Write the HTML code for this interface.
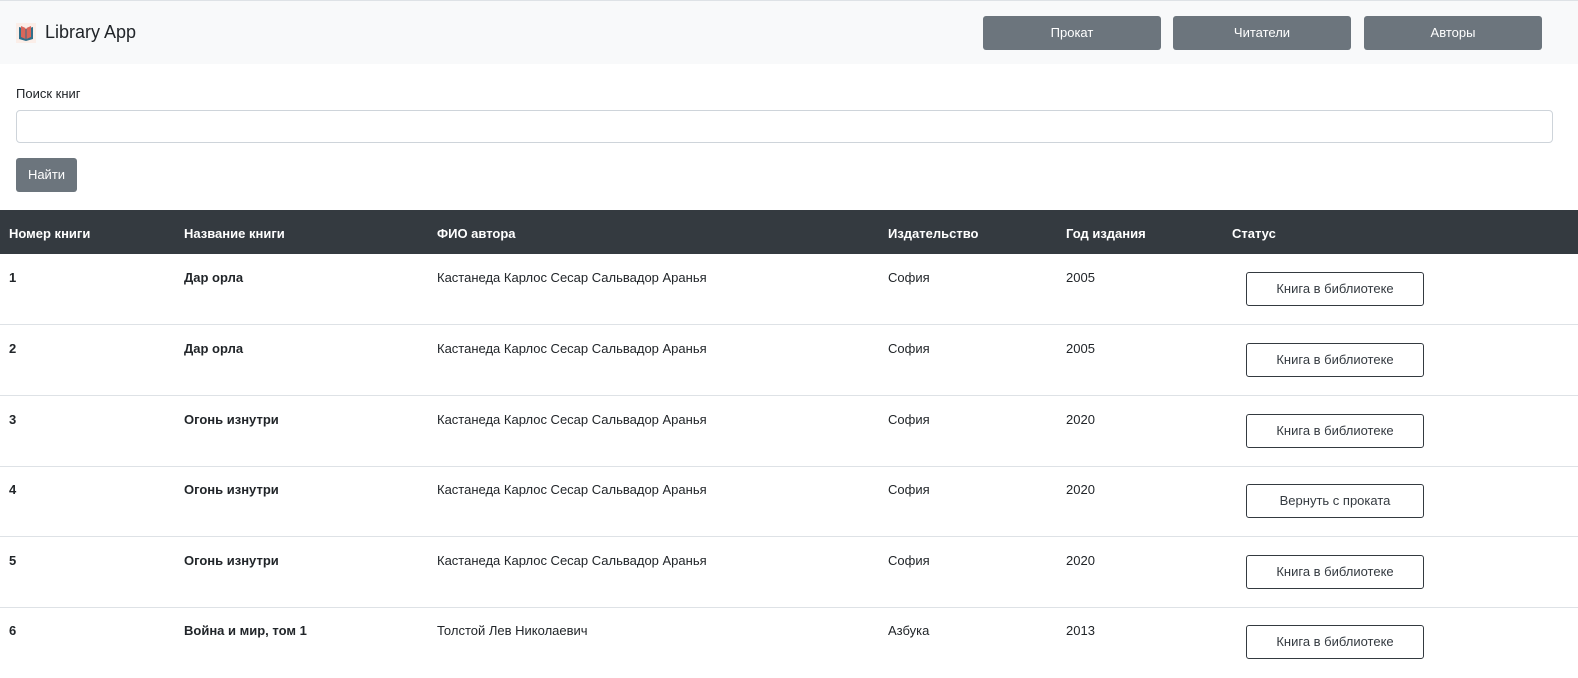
<!DOCTYPE html>
<html><head><meta charset="utf-8"><style>
*{box-sizing:border-box;margin:0;padding:0}
body{width:1578px;height:678px;overflow:hidden;background:#fff;font-family:"Liberation Sans",sans-serif;color:#212529;font-size:13px}
.nav{position:absolute;top:0;left:0;width:1578px;height:64px;background:#f8f9fa;border-top:1px solid #dee2e6}
.brand{position:absolute;left:16px;top:21px;font-size:18px;display:flex;align-items:center}
.brand svg{margin-right:9px}
.nb{position:absolute;top:15px;width:178px;height:34px;background:#6c757d;color:#fff;border-radius:3px;text-align:center;line-height:34px;font-size:13px}
.lbl{position:absolute;left:16px;top:86px;font-size:13px}
.inp{position:absolute;left:16px;top:110px;width:1537px;height:33px;border:1px solid #ced4da;border-radius:4px}
.find{position:absolute;left:16px;top:158px;width:61px;height:34px;background:#6c757d;color:#fff;border-radius:3px;text-align:center;line-height:34px}
.th{position:absolute;top:210px;left:0;width:1578px;height:44px;background:#343a40;color:#fff;font-weight:bold}
.c{position:absolute}
.th .c{top:16px}
.row{position:absolute;left:0;width:1578px;height:71px;border-bottom:1px solid #dee2e6}
.row .c{top:16px}
.b{font-weight:bold}
.sb{position:absolute;left:1246px;top:18px;width:178px;height:34px;border:1px solid #343a40;border-radius:3px;text-align:center;line-height:32px;color:#343a40}
</style></head><body>
<div class="nav">
<div class="brand"><svg width="20" height="20" viewBox="0 0 20 20"><rect width="20" height="20" fill="#fbeee8"/><path d="M3 4 L3 16 L10 18 L17 16 L17 4 L10 6 Z" fill="#2f6f8a"/><path d="M5 3 L5 14 L9.5 16 L9.5 5 Z M15 3 L15 14 L10.5 16 L10.5 5 Z" fill="#d9665a"/></svg>Library App</div>
<div class="nb" style="left:983px">Прокат</div>
<div class="nb" style="left:1173px">Читатели</div>
<div class="nb" style="left:1364px">Авторы</div>
</div>
<div class="lbl">Поиск книг</div>
<div class="inp"></div>
<div class="find">Найти</div>
<div class="th"><span class="c" style="left:9px">Номер книги</span><span class="c" style="left:184px">Название книги</span><span class="c" style="left:437px">ФИО автора</span><span class="c" style="left:888px">Издательство</span><span class="c" style="left:1066px">Год издания</span><span class="c" style="left:1232px">Статус</span></div>

<div class="row" style="top:254px"><span class="c b" style="left:9px">1</span><span class="c b" style="left:184px">Дар орла</span><span class="c" style="left:437px">Кастанеда Карлос Сесар Сальвадор Аранья</span><span class="c" style="left:888px">София</span><span class="c" style="left:1066px">2005</span><div class="sb">Книга в библиотеке</div></div>
<div class="row" style="top:325px"><span class="c b" style="left:9px">2</span><span class="c b" style="left:184px">Дар орла</span><span class="c" style="left:437px">Кастанеда Карлос Сесар Сальвадор Аранья</span><span class="c" style="left:888px">София</span><span class="c" style="left:1066px">2005</span><div class="sb">Книга в библиотеке</div></div>
<div class="row" style="top:396px"><span class="c b" style="left:9px">3</span><span class="c b" style="left:184px">Огонь изнутри</span><span class="c" style="left:437px">Кастанеда Карлос Сесар Сальвадор Аранья</span><span class="c" style="left:888px">София</span><span class="c" style="left:1066px">2020</span><div class="sb">Книга в библиотеке</div></div>
<div class="row" style="top:466px"><span class="c b" style="left:9px">4</span><span class="c b" style="left:184px">Огонь изнутри</span><span class="c" style="left:437px">Кастанеда Карлос Сесар Сальвадор Аранья</span><span class="c" style="left:888px">София</span><span class="c" style="left:1066px">2020</span><div class="sb">Вернуть с проката</div></div>
<div class="row" style="top:537px"><span class="c b" style="left:9px">5</span><span class="c b" style="left:184px">Огонь изнутри</span><span class="c" style="left:437px">Кастанеда Карлос Сесар Сальвадор Аранья</span><span class="c" style="left:888px">София</span><span class="c" style="left:1066px">2020</span><div class="sb">Книга в библиотеке</div></div>
<div class="row" style="top:607px;border-bottom:none"><span class="c b" style="left:9px">6</span><span class="c b" style="left:184px">Война и мир, том 1</span><span class="c" style="left:437px">Толстой Лев Николаевич</span><span class="c" style="left:888px">Азбука</span><span class="c" style="left:1066px">2013</span><div class="sb">Книга в библиотеке</div></div>
</body></html>
